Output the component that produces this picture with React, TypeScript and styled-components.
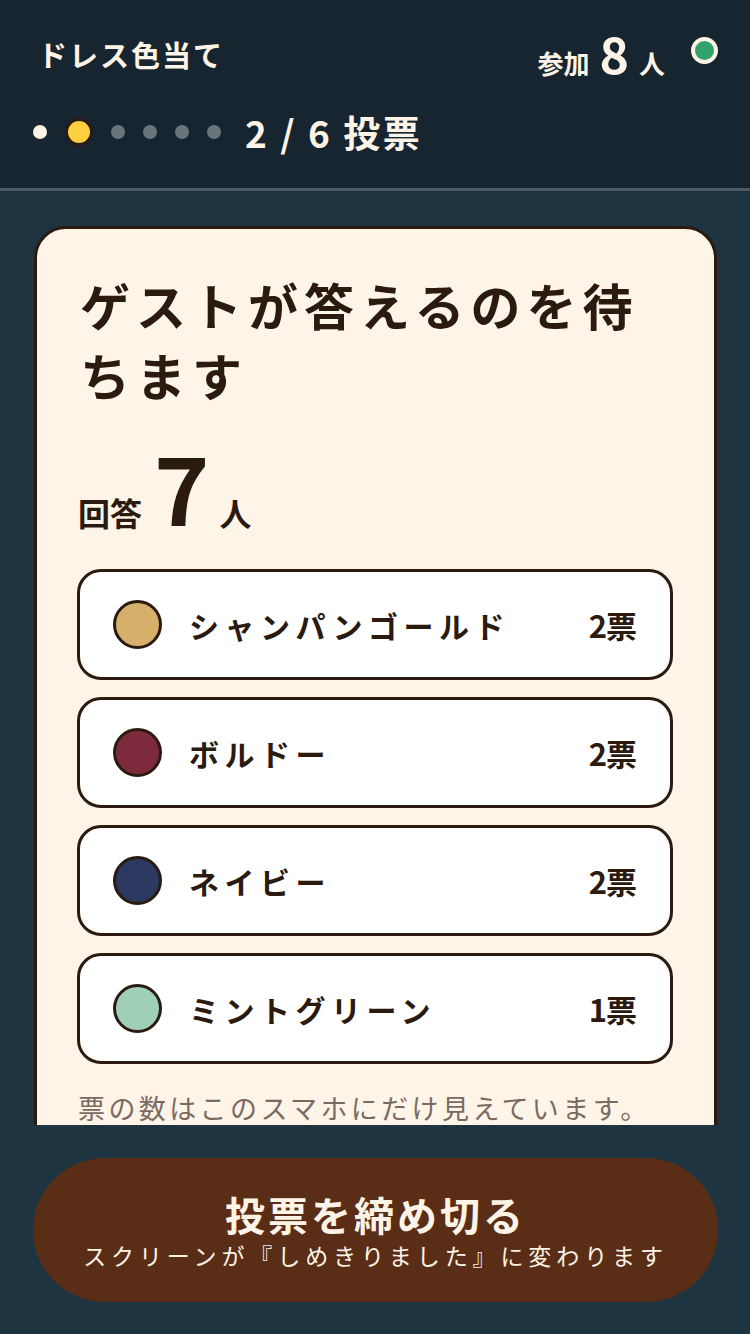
import React from "react";
import styled, { createGlobalStyle } from "styled-components";

const GlobalStyle = createGlobalStyle`
  html, body {
    margin: 0;
    padding: 0;
    background: #1f3441;
  }
  * {
    box-sizing: border-box;
  }
  body {
    font-family: "Noto Sans CJK JP", "Noto Sans", sans-serif;
  }
`;

const Screen = styled.div`
  width: 750px;
  height: 1334px;
  display: flex;
  flex-direction: column;
  background: #1f3441;
  overflow: hidden;
`;

const Header = styled.header`
  height: 191px;
  flex-shrink: 0;
  background: #16252f;
  border-bottom: 3px solid #4b5a63;
  padding: 22px 32px 0 38px;
  display: flex;
  flex-direction: column;
`;

const TopRow = styled.div`
  display: flex;
  align-items: center;
  justify-content: space-between;
  height: 64px;
`;

const AppTitle = styled.div`
  color: #fdf3e6;
  font-size: 29px;
  font-weight: 700;
  letter-spacing: 2px;
`;

const Joined = styled.div`
  display: flex;
  align-items: baseline;
  gap: 10px;
  color: #fdf3e6;
  font-weight: 700;
`;

const JoinedLabel = styled.span`
  font-size: 26px;
`;

const JoinedCount = styled.span`
  font-size: 50px;
  line-height: 1;
`;

const StatusDot = styled.span`
  width: 27px;
  height: 27px;
  border-radius: 50%;
  background: #2fa36b;
  border: 4px solid #fdf3e6;
  margin-left: 16px;
  align-self: center;
  position: relative;
  top: -4px;
`;

const ProgressRow = styled.div`
  display: flex;
  align-items: center;
  margin-top: 14px;
  height: 64px;
`;

const Steps = styled.div`
  display: flex;
  align-items: center;
  gap: 18px;
  margin-left: -5px;
`;

const Step = styled.span<{ $state: "done" | "current" | "todo" }>`
  width: ${(p) => (p.$state === "current" ? "28px" : "14px")};
  height: ${(p) => (p.$state === "current" ? "28px" : "14px")};
  border-radius: 50%;
  background: ${(p) =>
    p.$state === "done" ? "#fdf3e6" : p.$state === "current" ? "#fcd03f" : "#6a747b"};
  border: ${(p) => (p.$state === "current" ? "3px solid #2a1a10" : "none")};
`;

const ProgressText = styled.div`
  color: #fdf3e6;
  font-size: 37px;
  font-weight: 700;
  margin-left: 24px;
  letter-spacing: 2.5px;
`;

const Main = styled.main`
  flex: 1;
  overflow: hidden;
  padding: 35px 33px 0 34px;
`;

const Card = styled.section`
  background: #fff4e8;
  border: 3px solid #2a1a10;
  border-radius: 32px;
  padding: 40px 41px 40px 40px;
  color: #2a1a10;
`;

const Title = styled.h1`
  margin: 0 0 0 3px;
  font-size: 50px;
  line-height: 70px;
  font-weight: 700;
  letter-spacing: 6px;
`;

const AnswerRow = styled.div`
  display: flex;
  align-items: baseline;
  gap: 12px;
  margin: 30px 0 0 1px;
  font-weight: 700;
`;

const AnswerLabel = styled.span`
  font-size: 32px;
`;

const AnswerCount = styled.span`
  font-size: 94px;
  line-height: 92px;
  letter-spacing: -2px;
`;

const Options = styled.div`
  display: flex;
  flex-direction: column;
  gap: 17px;
  margin-top: 34px;
`;

const Option = styled.div`
  height: 111px;
  background: #ffffff;
  border: 3px solid #2a1a10;
  border-radius: 24px;
  display: flex;
  align-items: center;
  padding: 0 34px 0 33px;
`;

const Swatch = styled.span<{ $color: string }>`
  width: 49px;
  height: 49px;
  border-radius: 50%;
  background: ${(p) => p.$color};
  border: 3px solid #2a1a10;
  flex-shrink: 0;
`;

const OptionName = styled.span`
  flex: 1;
  margin-left: 27px;
  font-size: 30px;
  font-weight: 700;
  letter-spacing: 5.5px;
`;

const Votes = styled.span`
  font-size: 31px;
  font-weight: 700;
  letter-spacing: -1px;
`;

const Note = styled.p`
  margin: 24px 0 0 1px;
  font-size: 27px;
  color: #7a6b62;
  letter-spacing: 3.4px;
  white-space: nowrap;
`;

const Footer = styled.footer`
  height: 209px;
  flex-shrink: 0;
  padding: 33px 32px 0 33px;
  background: #1f3441;
`;

const CloseButton = styled.button`
  width: 100%;
  height: 144px;
  border: none;
  border-radius: 72px;
  background: #5a2e16;
  color: #fdf3e6;
  font-family: inherit;
  display: flex;
  flex-direction: column;
  align-items: center;
  justify-content: center;
  padding: 0;
`;

const ButtonLabel = styled.span`
  font-size: 40px;
  font-weight: 700;
  line-height: 50px;
  letter-spacing: 3px;
`;

const ButtonHint = styled.span`
  font-size: 23px;
  line-height: 32px;
  letter-spacing: 4.9px;
`;

const options = [
  { name: "シャンパンゴールド", color: "#d6b06a", votes: 2 },
  { name: "ボルドー", color: "#7d2a3d", votes: 2 },
  { name: "ネイビー", color: "#2c3a62", votes: 2 },
  { name: "ミントグリーン", color: "#9fcfb6", votes: 1 },
];

const steps: Array<"done" | "current" | "todo"> = ["done", "current", "todo", "todo", "todo", "todo"];

export default function App() {
  return (
    <>
      <GlobalStyle />
      <Screen>
        <Header>
          <TopRow>
            <AppTitle>ドレス色当て</AppTitle>
            <Joined>
              <JoinedLabel>参加</JoinedLabel>
              <JoinedCount>8</JoinedCount>
              <JoinedLabel>人</JoinedLabel>
              <StatusDot />
            </Joined>
          </TopRow>
          <ProgressRow>
            <Steps>
              {steps.map((s, i) => (
                <Step key={i} $state={s} />
              ))}
            </Steps>
            <ProgressText>2 / 6 投票</ProgressText>
          </ProgressRow>
        </Header>
        <Main>
          <Card>
            <Title>ゲストが答えるのを待ちます</Title>
            <AnswerRow>
              <AnswerLabel>回答</AnswerLabel>
              <AnswerCount>7</AnswerCount>
              <AnswerLabel>人</AnswerLabel>
            </AnswerRow>
            <Options>
              {options.map((o) => (
                <Option key={o.name}>
                  <Swatch $color={o.color} />
                  <OptionName>{o.name}</OptionName>
                  <Votes>{o.votes}票</Votes>
                </Option>
              ))}
            </Options>
            <Note>票の数はこのスマホにだけ見えています。</Note>
          </Card>
        </Main>
        <Footer>
          <CloseButton>
            <ButtonLabel>投票を締め切る</ButtonLabel>
            <ButtonHint>スクリーンが『しめきりました』に変わります</ButtonHint>
          </CloseButton>
        </Footer>
      </Screen>
    </>
  );
}
